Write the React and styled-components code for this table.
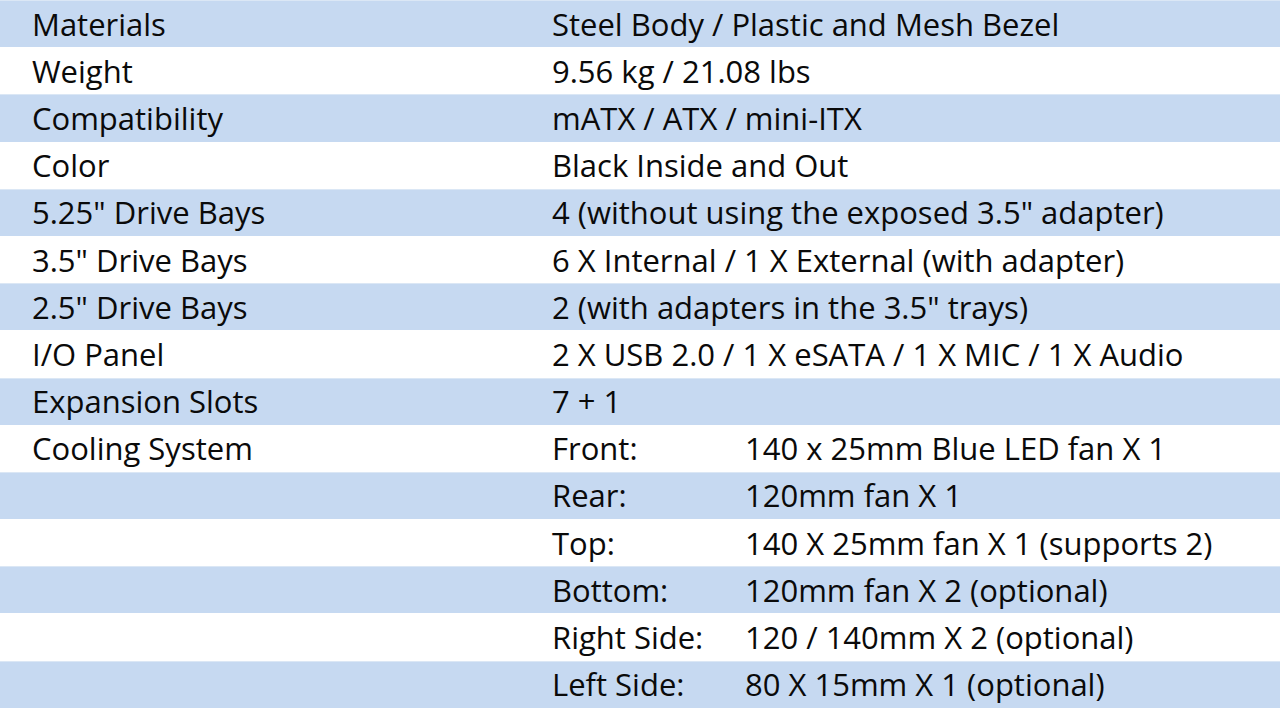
import styled, { createGlobalStyle } from 'styled-components';

const GlobalStyle = createGlobalStyle`
    html, body {
        margin: 0;
        padding: 0;
        background: #ffffff;
    }
    body {
        font-family: "Open Sans", "Noto Sans", sans-serif;
        color: #0a0a0a;
    }
`;

const specs = [
    ['Materials', 'Steel Body / Plastic and Mesh Bezel'],
    ['Weight', '9.56 kg / 21.08 lbs'],
    ['Compatibility', 'mATX / ATX / mini-ITX'],
    ['Color', 'Black Inside and Out'],
    ['5.25" Drive Bays', '4 (without using the exposed 3.5" adapter)'],
    ['3.5" Drive Bays', '6 X Internal / 1 X External (with adapter)'],
    ['2.5" Drive Bays', '2 (with adapters in the 3.5" trays)'],
    ['I/O Panel', '2 X USB 2.0 / 1 X eSATA / 1 X MIC / 1 X Audio'],
    ['Expansion Slots', '7 + 1'],
];

const cooling = [
    ['Front:', '140 x 25mm Blue LED fan X 1'],
    ['Rear:', '120mm fan X 1'],
    ['Top:', '140 X 25mm fan X 1 (supports 2)'],
    ['Bottom:', '120mm fan X 2 (optional)'],
    ['Right Side:', '120 / 140mm X 2 (optional)'],
    ['Left Side:', '80 X 15mm X 1 (optional)'],
];

const SpecTable = () => {
    let index = 0;
    return (
        <StyledTable>
            {specs.map(([label, value]) => {
                const shaded = index++ % 2 === 0;
                return (
                    <StyledRow key={label} $shaded={shaded}>
                        <StyledLabel>{label}</StyledLabel>
                        <StyledValue>{value}</StyledValue>
                    </StyledRow>
                );
            })}
            {cooling.map(([part, fan], i) => {
                const shaded = index++ % 2 === 0;
                return (
                    <StyledRow key={part} $shaded={shaded}>
                        <StyledLabel>{i === 0 ? 'Cooling System' : ''}</StyledLabel>
                        <StyledSplit>
                            <span>{part}</span>
                            <span>{fan}</span>
                        </StyledSplit>
                    </StyledRow>
                );
            })}
        </StyledTable>
    );
};

const App = () => (
    <>
        <GlobalStyle />
        <SpecTable />
    </>
);

const StyledTable = styled.div`
    width: 1280px;
    display: flex;
    flex-direction: column;
`;

const StyledRow = styled.div`
    height: 47.2px;
    box-sizing: border-box;
    display: grid;
    grid-template-columns: 552px 1fr;
    align-items: center;
    background: ${({ $shaded }) => ($shaded ? '#c6d9f1' : '#ffffff')};
    border-top: 1px solid ${({ $shaded }) => ($shaded ? '#dbe7f5' : '#ffffff')};
    font-size: 31px;
    line-height: 1;
    white-space: nowrap;
`;

const StyledLabel = styled.div`
    padding-left: 32px;
`;

const StyledValue = styled.div``;

const StyledSplit = styled.div`
    display: grid;
    grid-template-columns: 193px 1fr;
`;

export default App;
